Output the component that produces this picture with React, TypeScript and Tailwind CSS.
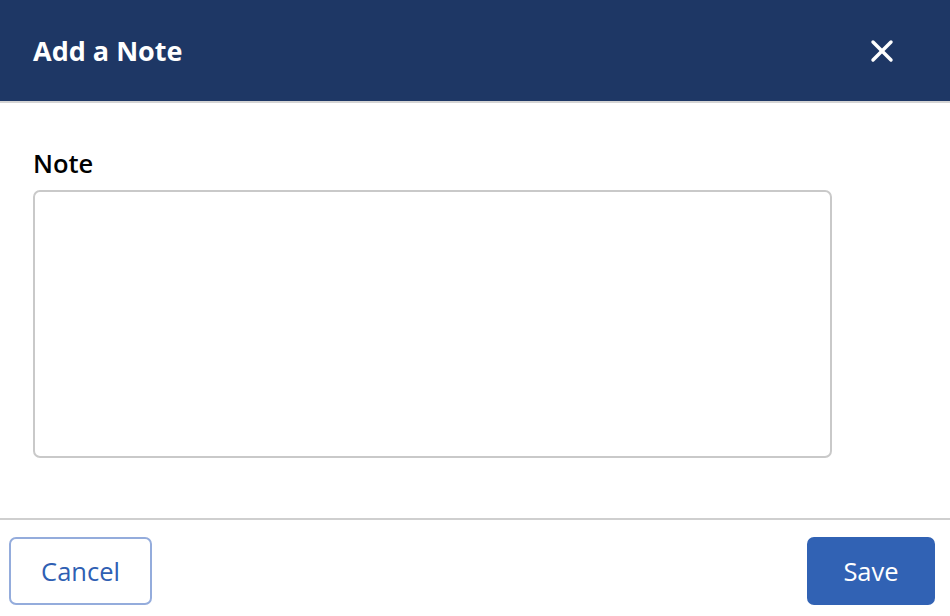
import { X } from 'lucide-react';

export default function App() {
  return (
    <div className="w-[950px] h-[616px] bg-white flex flex-col font-['Open_Sans',sans-serif] overflow-hidden">
      {/* header */}
      <div className="h-[103px] shrink-0 bg-[#1e3765] border-b-2 border-[#d4d4d4] flex items-center justify-between pl-[33px] pr-[50px]">
        <h1 className="text-white font-bold text-[27px] leading-none">Add a Note</h1>
        <button className="text-white">
          <X size={36} strokeWidth={2.3} />
        </button>
      </div>

      {/* body */}
      <div className="flex-1 pt-[44px] px-[33px]">
        <label className="block text-black font-semibold text-[25.5px] leading-[32px] mb-[11px]">Note</label>
        <textarea className="block w-[799px] h-[268px] border-2 border-[#c9c9c9] rounded-[7px] resize-none outline-none p-3 text-base" />
      </div>

      {/* footer */}
      <div className="h-[98px] shrink-0 border-t-2 border-[#cfcfcf] flex items-start justify-between pt-[17px] pl-[9px] pr-[15px]">
        <button className="w-[143px] h-[68px] rounded-[7px] border-2 border-[#94acdc] text-[#2f5fb3] text-[25.5px]">
          Cancel
        </button>
        <button className="w-[128px] h-[68px] rounded-[7px] bg-[#3162b4] text-white text-[25.5px]">
          Save
        </button>
      </div>
    </div>
  );
}
